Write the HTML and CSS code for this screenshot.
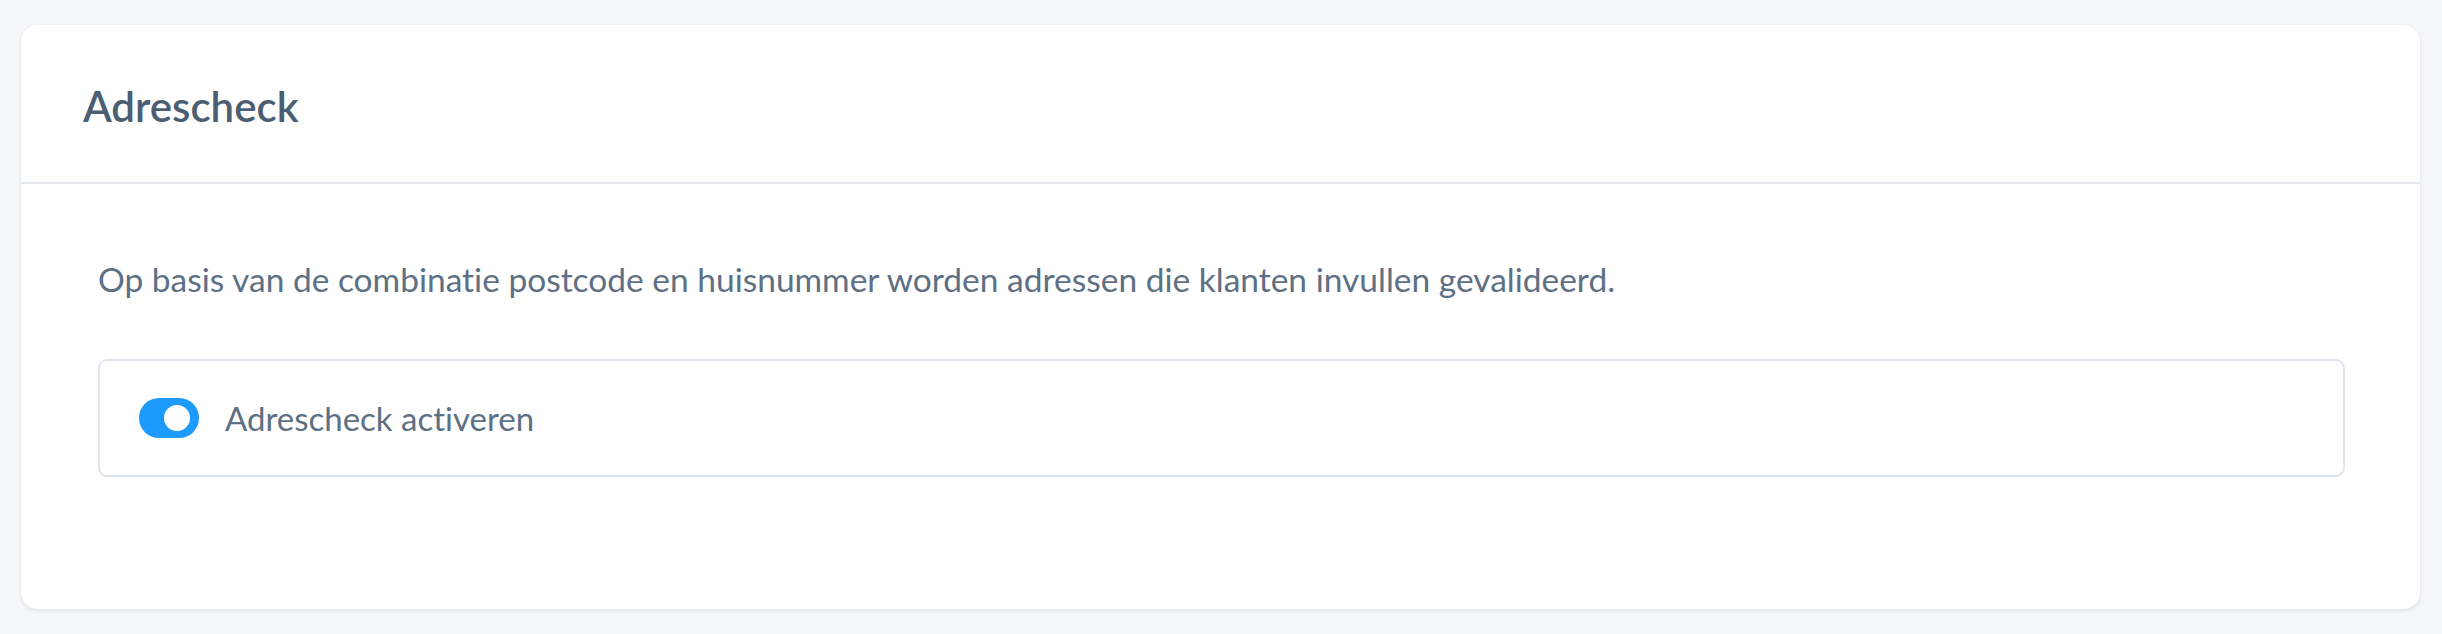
FILE: index.html
```html
<!DOCTYPE html>
<html lang="nl">
<head>
<meta charset="utf-8">
<title>Adrescheck</title>
<link rel="stylesheet" href="styles.css">
</head>
<body>
<div class="page">
  <section class="card">
    <header class="card-header">
      <h2 class="card-title">Adrescheck</h2>
    </header>
    <div class="card-body">
      <p class="intro">Op basis van de combinatie postcode en huisnummer worden adressen die klanten invullen gevalideerd.</p>
      <label class="option">
        <span class="toggle"><span class="knob"></span></span>
        <span class="option-label">Adrescheck activeren</span>
      </label>
    </div>
  </section>
</div>
</body>
</html>
```
FILE: styles.css
```css
html, body {
  margin: 0;
  padding: 0;
  background: #f6f7f9;
}
body {
  font-family: Lato, "Open Sans", sans-serif;
  font-variant-ligatures: none;
  color: #5d7084;
}
.page {
  padding: 25px 22px 25px 21px;
}
.card {
  background: #ffffff;
  border-radius: 16px;
  box-shadow: 0 2px 4px rgba(30, 40, 60, 0.10), 0 0 2px rgba(30, 40, 60, 0.06);
  height: 584px;
  box-sizing: border-box;
}
.card-header {
  height: 159px;
  display: flex;
  align-items: center;
  padding: 5px 62px 0 62px;
  border-bottom: 2px solid #e3e8ee;
  box-sizing: border-box;
}
.card-title {
  margin: 0;
  font-size: 42px;
  font-weight: 600;
  color: #4b5e72;
}
.card-body {
  padding: 71px 75px 0 77px;
}
.intro {
  margin: 0 0 56px 0;
  font-size: 33.5px;
  line-height: 48px;
}
.option {
  display: flex;
  align-items: center;
  gap: 26px;
  height: 118px;
  box-sizing: border-box;
  border: 2px solid #e0e6ed;
  border-radius: 9px;
  padding: 0 39px;
}
.toggle {
  position: relative;
  width: 60px;
  height: 40px;
  border-radius: 20px;
  background: #1c9bfd;
  flex: none;
}
.knob {
  position: absolute;
  top: 7px;
  right: 9px;
  width: 26px;
  height: 26px;
  border-radius: 50%;
  background: #ffffff;
}
.option-label {
  font-size: 33px;
}
```
